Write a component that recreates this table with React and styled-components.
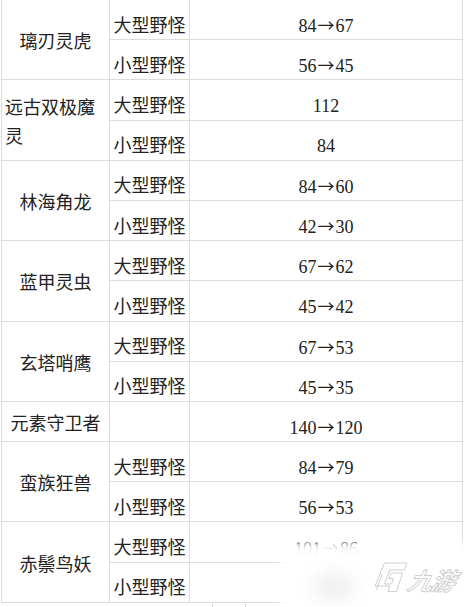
import React from "react";
import styled, { createGlobalStyle } from "styled-components";

const Global = createGlobalStyle`
  html, body { margin: 0; padding: 0; background: #ffffff; }
  body { width: 464px; height: 607px; overflow: hidden; position: relative; }
`;

const Page = styled.div`
  position: relative;
  width: 464px;
  height: 607px;
  overflow: hidden;
  background: #fff;
`;

const Table = styled.table`
  border-collapse: collapse;
  table-layout: fixed;
  margin: -1px 0 0 1px;
  width: 461px;
  font-family: "Liberation Serif", "Noto Sans CJK SC", serif;
  font-size: 18px;
  color: #222;
`;

const Row = styled.tr`
  height: 40.2px;
`;

const Cell = styled.td`
  border: 1px solid #dcdcdc;
  padding: ${(p) => (p.$name ? "6px 3px 0 3px" : "12px 2px 0 2px")};
  text-align: ${(p) => p.$align || "center"};
  vertical-align: middle;
  line-height: ${(p) => (p.$name ? "29px" : "24px")};
  white-space: ${(p) => (p.$nowrap ? "nowrap" : "normal")};
`;

const Arrow = styled.span`
  font-family: "Noto Sans CJK SC", sans-serif;
  font-size: 17px;
  display: inline-block;
  margin: 0 1px;
`;

const Ticks = styled.div`
  display: flex;
  gap: 32px;
  margin-left: 212px;
  margin-top: 1px;
`;

const Tick = styled.span`
  width: 1px;
  height: 3px;
  background: #d0d0d0;
`;

const Watermark = styled.div`
  position: absolute;
  left: 280px;
  top: 543px;
  width: 200px;
  height: 80px;
  background: rgba(255, 255, 255, 0.97);
  filter: blur(3px);
`;

const Blob = styled.div`
  position: absolute;
  left: 312px;
  top: 572px;
  width: 44px;
  height: 30px;
  border-radius: 50%;
  background: rgba(200, 200, 200, 0.25);
  filter: blur(8px);
`;

const Logo = styled.div`
  position: absolute;
  left: 374px;
  top: 562px;
  display: flex;
  align-items: flex-end;
  gap: 1px;
`;

const LogoText = styled.span`
  font-family: "Noto Sans CJK SC", sans-serif;
  font-size: 24px;
  font-weight: 700;
  font-style: italic;
  line-height: 27px;
  color: transparent;
  -webkit-text-stroke: 1px #cfcfcf;
  transform: skewX(-14deg);
  letter-spacing: -1px;
`;

const data = [
  { name: "璃刃灵虎", rows: [["大型野怪", "84→67"], ["小型野怪", "56→45"]] },
  { name: "远古双极魔灵", align: "left", rows: [["大型野怪", "112"], ["小型野怪", "84"]] },
  { name: "林海角龙", rows: [["大型野怪", "84→60"], ["小型野怪", "42→30"]] },
  { name: "蓝甲灵虫", rows: [["大型野怪", "67→62"], ["小型野怪", "45→42"]] },
  { name: "玄塔哨鹰", rows: [["大型野怪", "67→53"], ["小型野怪", "45→35"]] },
  { name: "元素守卫者", rows: [["", "140→120"]] },
  { name: "蛮族狂兽", rows: [["大型野怪", "84→79"], ["小型野怪", "56→53"]] },
  { name: "赤鬃鸟妖", rows: [["大型野怪", "101→86"], ["小型野怪", ""]] },
];

function Value({ text }) {
  const parts = text.split("→");
  if (parts.length < 2) return text;
  return (
    <>
      {parts[0]}
      <Arrow>→</Arrow>
      {parts[1]}
    </>
  );
}

function LogoMark() {
  return (
    <svg width="34" height="31" viewBox="0 0 34 31" fill="none" stroke="#cfcfcf" strokeWidth="1" strokeLinejoin="round">
      <path d="M10.5 1 L33 1 L30.5 8 L15.5 8 L10.5 22 L17.5 22 L19.5 16.5 L15 16.5 L17 11 L28.5 11 L22.5 29.5 L14 29.5 L16 24 L3 24 L1 24 Z" />
      <path d="M2.5 28 L8 12" />
    </svg>
  );
}

export default function App() {
  return (
    <Page>
      <Global />
      <Table>
        <colgroup>
          <col style={{ width: "108px" }} />
          <col style={{ width: "80px" }} />
          <col style={{ width: "273px" }} />
        </colgroup>
        <tbody>
          {data.map((g) =>
            g.rows.map((r, i) => (
              <Row key={g.name + i}>
                {i === 0 && (
                  <Cell $name rowSpan={g.rows.length} $align={g.align}>
                    {g.name}
                  </Cell>
                )}
                <Cell $nowrap>{r[0]}</Cell>
                <Cell $nowrap>
                  <Value text={r[1]} />
                </Cell>
              </Row>
            ))
          )}
        </tbody>
      </Table>
      <Ticks>
        <Tick />
        <Tick />
      </Ticks>
      <Watermark />
      <Blob />
      <Logo>
        <LogoMark />
        <LogoText>九游</LogoText>
      </Logo>
    </Page>
  );
}
